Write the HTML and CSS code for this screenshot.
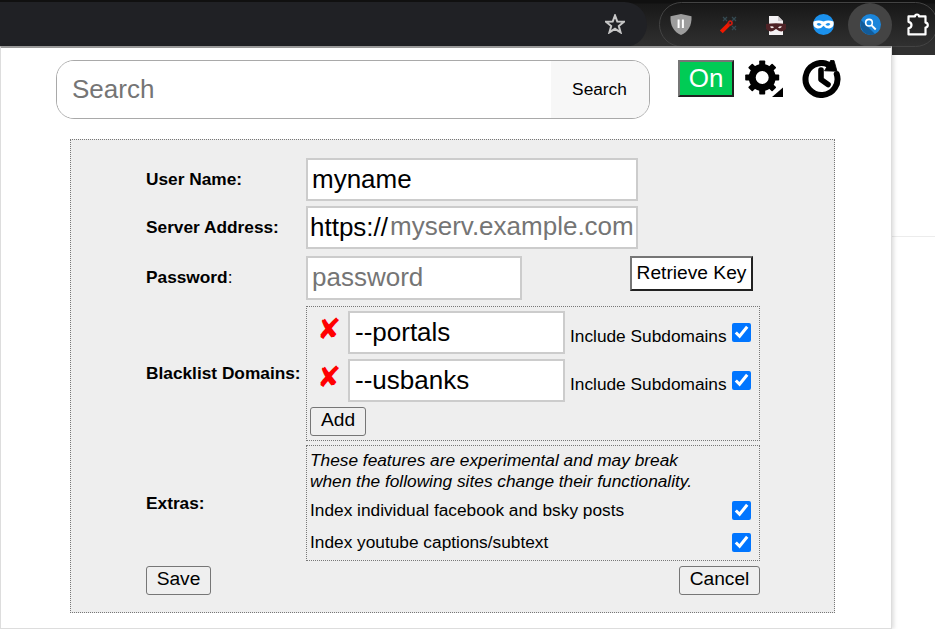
FILE: index.html
```html
<!DOCTYPE html>
<html lang="en">
<head>
<meta charset="utf-8">
<title>Settings</title>
<link rel="stylesheet" href="styles.css">
</head>
<body>
<header class="toolbar">
  <div class="omnibox">
    <svg width="20" height="20" viewBox="0 0 20 20"><path d="M10 1.4 12.3 7.5 19 7.8 13.8 12 15.6 18.4 10 14.8 4.4 18.4 6.2 12 1 7.8 7.7 7.5Z" fill="none" stroke="#c7c7c7" stroke-width="2"/></svg>
  </div>
  <div class="extensions">
    <svg class="shield" width="22" height="23" viewBox="0 0 22 23"><path d="M11 1 21.5 3.3C22 13 18 19 11 22 4 19 0 13 .5 3.3Z" fill="#9d9d9d"/><path d="M8.6 6.5v8.4M12.9 6.5v8.4" stroke="#fff" stroke-width="2"/></svg>
    <svg class="wand" width="18" height="18" viewBox="0 0 18 18"><path d="m2.3 15.8 8-8" stroke="#ef1800" stroke-width="4"/><circle cx="11.2" cy="7" r="1.8" fill="none" stroke="#c81b10" stroke-width="1.7"/><path d="m4 1 4 4M8 1 4 5M13 1l4 4M17 1l-4 4M13 10l4 4M17 10l-4 4" stroke="#354b53" stroke-width="1.2"/></svg>
    <svg class="mask-page" width="20" height="20" viewBox="0 0 20 20"><path d="M3 1h9l5 5v14H3Z" fill="#f4f1f3"/><path d="M12 1v5h5Z" fill="#cfcbce"/><path d="M0 9q10-1.500 20 0v5q-3 3.500-7 2l-3-2-3 2q-4 1.500-7-2Z" fill="#4e2226"/><path d="M4 11.500q3-1 4 1-3 2-4-1ZM12 12.500q2-2 4-1-2 3-4 1Z" fill="#f4e9e9"/></svg>
    <svg class="mask-round" width="21" height="21" viewBox="0 0 21 21"><circle cx="10.5" cy="10.5" r="10.5" fill="#1b91ed"/><path d="M.5 7.4Q6 5.4 10.5 7.4 15 5.4 20.5 7.4q1 6-4 7-4 .3-6-2.7-2 3-6 2.7-5-1-4-7Z" fill="#fff"/><path d="M3.6 10q3-2.2 5 .8-3.5 2.3-5-.8ZM12.4 10.8q2-3 5-.8-1.5 3.1-5 .8Z" fill="#1b91ed"/></svg>
    <span class="active-extension"><svg width="21" height="21" viewBox="0 0 21 21"><circle cx="10.5" cy="10.5" r="10.5" fill="#1b85da"/><path d="m6 11 9 9Q8 22.500 3.500 18-1 13 1 6Z" fill="#125b99"/><circle cx="9" cy="8.700" r="3.300" fill="none" stroke="#fff" stroke-width="1.600"/><path d="m11.400 11.200 4.300 4.300" stroke="#fff" stroke-width="1.900"/></svg></span>
    <svg class="puzzle" width="22" height="23" viewBox="0 0 22 23"><path d="M1.500 3.400H8Q8 1.500 10 1.500T12 3.400h6.500v6.200q2.300.2 2.300 2.500t-2.300 2.500v6.800h-17v-6q3-.6 3-3.300t-3-3.300Z" fill="none" stroke="#fff" stroke-width="2.200" stroke-linejoin="round"/></svg>
  </div>
</header>
<main class="popup">
  <div class="top">
    <form class="search">
      <input class="search-input" type="text" placeholder="Search">
      <button class="search-button" type="button">Search</button>
    </form>
    <button class="toggle" type="button">On</button>
    <svg class="gear" width="40" height="38" viewBox="0 0 40 38"><g transform="translate(17.200 17.500)"><circle r="10" fill="none" stroke="#000" stroke-width="7"/><g fill="#000"><rect id="tooth" x="-3" y="-17" width="6" height="6" rx=".8"/><use href="#tooth" transform="rotate(45)"/><use href="#tooth" transform="rotate(90)"/><use href="#tooth" transform="rotate(135)"/><use href="#tooth" transform="rotate(180)"/><use href="#tooth" transform="rotate(225)"/><use href="#tooth" transform="rotate(270)"/><use href="#tooth" transform="rotate(315)"/></g></g><path d="M38 27.500V37H27Z"/></svg>
    <svg class="history" width="39" height="38" viewBox="0 0 39 38"><path d="M26 4.400A16 16 0 1 0 34.700 14" fill="none" stroke="#000" stroke-width="6" stroke-linecap="round"/><path d="M22.500 10.800 29 0l3 .5 3 10.800Z" stroke="#000" stroke-width=".8"/><path d="M19 10v9.500l7 5" fill="none" stroke="#000" stroke-width="5.600" stroke-linecap="round" stroke-linejoin="round"/></svg>
  </div>
  <form class="settings">
    <label class="label" for="user">User Name:</label>
    <div class="row"><input id="user" class="field wide" type="text" value="myname"></div>

    <label class="label" for="server">Server Address:</label>
    <div class="row"><div class="field wide address"><span>https://</span><input id="server" type="text" placeholder="myserv.example.com"></div></div>

    <label class="label" for="pass">Password<span class="colon">:</span></label>
    <div class="row password-row"><input id="pass" class="field password" type="password" placeholder="password"><button class="retrieve" type="button">Retrieve Key</button></div>

    <span class="label">Blacklist Domains:</span>
    <div class="group blacklist">
      <div class="domain"><span class="remove">✘</span><input class="field domain-name" type="text" value="--portals"><label class="include">Include Subdomains</label><input class="check" type="checkbox" checked></div>
      <div class="domain"><span class="remove">✘</span><input class="field domain-name" type="text" value="--usbanks"><label class="include">Include Subdomains</label><input class="check" type="checkbox" checked></div>
      <button class="button add" type="button">Add</button>
    </div>

    <span class="label">Extras:</span>
    <div class="group extras">
      <p class="note">These features are experimental and may break<br>when the following sites change their functionality.</p>
      <div class="extra"><label>Index individual facebook and bsky posts</label><input class="check" type="checkbox" checked></div>
      <div class="extra"><label>Index youtube captions/subtext</label><input class="check" type="checkbox" checked></div>
    </div>

    <div class="actions"><button class="button save" type="button">Save</button><button class="button cancel" type="button">Cancel</button></div>
  </form>
</main>
</body>
</html>
```
FILE: styles.css
```css
* { box-sizing: border-box; }

body {
  margin: 0;
  height: 629px;
  overflow: hidden;
  background: linear-gradient(#ececec, #ececec) 0 236px / 100% 1px no-repeat #fff;
  font: 17.3px "Liberation Sans", Arial, sans-serif;
  color: #000;
}

input, button { font-family: inherit; color: #000; margin: 0; }
svg { display: block; flex: none; }

.toolbar {
  display: flex;
  align-items: flex-start;
  height: 55px;
  background: linear-gradient(#101010, #101010 3px, #181818 4px, #303030 46px);
}

.omnibox {
  flex: none;
  width: 647px;
  height: 45px;
  margin-top: 2px;
  padding: 12px 22px 0 0;
  display: flex;
  justify-content: flex-end;
  background: #202125;
  border-radius: 0 23px 23px 0;
}

.extensions {
  display: flex;
  flex: none;
  align-items: center;
  width: 279px;
  height: 45px;
  margin: 2px 0 0 12px;
  padding-left: 10px;
  border: 1px solid #434343;
  border-radius: 23px;
}

.wand { margin-left: 27px; }
.mask-page { margin-left: 29px; }
.mask-round { margin-left: 27px; }

.active-extension {
  display: flex;
  flex: none;
  align-items: center;
  justify-content: center;
  width: 44px;
  height: 44px;
  margin-left: 14px;
  border-radius: 50%;
  background: #444;
}

.puzzle { margin-left: 15px; }

.popup {
  position: relative;
  width: 892px;
  height: 583px;
  margin-top: -9px;
  padding: 12px 0 0 55px;
  background: #fff;
  border: 1px solid #ddd;
  border-top: 2px solid #999;
  box-shadow: 2px 0 4px rgba(0, 0, 0, .13);
}

.top { display: flex; height: 59px; }

.search {
  display: flex;
  width: 594px;
  height: 59px;
  overflow: hidden;
  border: 1px solid #a9a9a9;
  border-radius: 18px;
}

.search-input {
  width: 494px;
  padding: 0 15px 1px;
  border: 0;
  background: #fff;
  font-size: 26px;
}

.search-button {
  flex: 1;
  padding: 0 1px 1px 0;
  border: 0;
  background: #f7f7f7;
  font-size: 17.3px;
}

.toggle {
  width: 56px;
  height: 37px;
  margin-left: 28px;
  padding: 0 0 2px;
  border: 2px solid;
  border-color: #767676 #212121 #212121 #767676;
  background: #00cc55;
  color: #fff;
  font-size: 26px;
  line-height: 30px;
}

.gear { margin-left: 11px; }
.history { margin-left: 17px; }

.settings {
  display: grid;
  grid-template-columns: 160px 454px;
  grid-template-rows: 43px 43px 47px 135px 115px 29px;
  row-gap: 5px;
  align-items: center;
  width: 765px;
  height: 474px;
  margin: 20px 0 0 14px;
  padding: 18px 0 0 75px;
  border: 1px dotted #777;
  background: #eee;
}

.label { font-weight: bold; white-space: nowrap; }
.colon { font-weight: normal; }
.row { display: flex; }

.password-row {
  align-self: start;
  align-items: flex-start;
  justify-content: space-between;
  padding: 2px 7px 0 0;
}

.field {
  height: 43px;
  padding: 0 4px;
  border: 2px solid #ccc;
  background: #fff;
  font-size: 26px;
}

.wide { width: 332px; }
.address { display: flex; align-items: center; padding: 0 2px; }

.address input {
  flex: 1;
  min-width: 0;
  height: 39px;
  padding: 0 0 3px 2px;
  border: 0;
  background: transparent;
  font-size: 26px;
}

.password { width: 216px; height: 44px; padding-bottom: 1px; }

.retrieve {
  width: 123px;
  height: 35px;
  padding: 0 0 2px;
  border: 2px solid;
  border-color: #767676 #212121 #212121 #767676;
  background: #fff;
  font-size: 19.2px;
}

.group { border: 1px dotted #777; height: 100%; }
.blacklist { padding: 4px 3px; }
.domain { display: flex; height: 43px; margin-bottom: 5px; }

.remove {
  width: 38px;
  padding-left: 7px;
  color: #f00;
  font: 29px/36px "DejaVu Sans", sans-serif;
}

.domain-name { width: 217px; padding: 0 5px; }
.include { width: 162px; padding: 15px 0 0 5px; white-space: nowrap; }

.check {
  flex: none;
  width: 19px;
  height: 19px;
  accent-color: #0075ff;
}

.domain .check { margin: 12px 0 0 5px; }

.button {
  height: 29px;
  padding: 0 0 3px;
  border: 1px solid #767676;
  border-radius: 3px;
  background: #efefef;
  font-size: 19.2px;
}

.add { width: 56px; display: block; }
.extras { height: 116px; margin-top: -1px; padding: 4px 8px 0 3px; }
.note { margin: 0; font-style: italic; line-height: 21px; white-space: nowrap; }
.extra { display: flex; align-items: center; justify-content: space-between; height: 32px; }
.note + .extra { margin-top: 2px; }
.actions { grid-column: 1 / 3; display: flex; justify-content: space-between; }
.save { width: 65px; }
.cancel { width: 81px; }
```
